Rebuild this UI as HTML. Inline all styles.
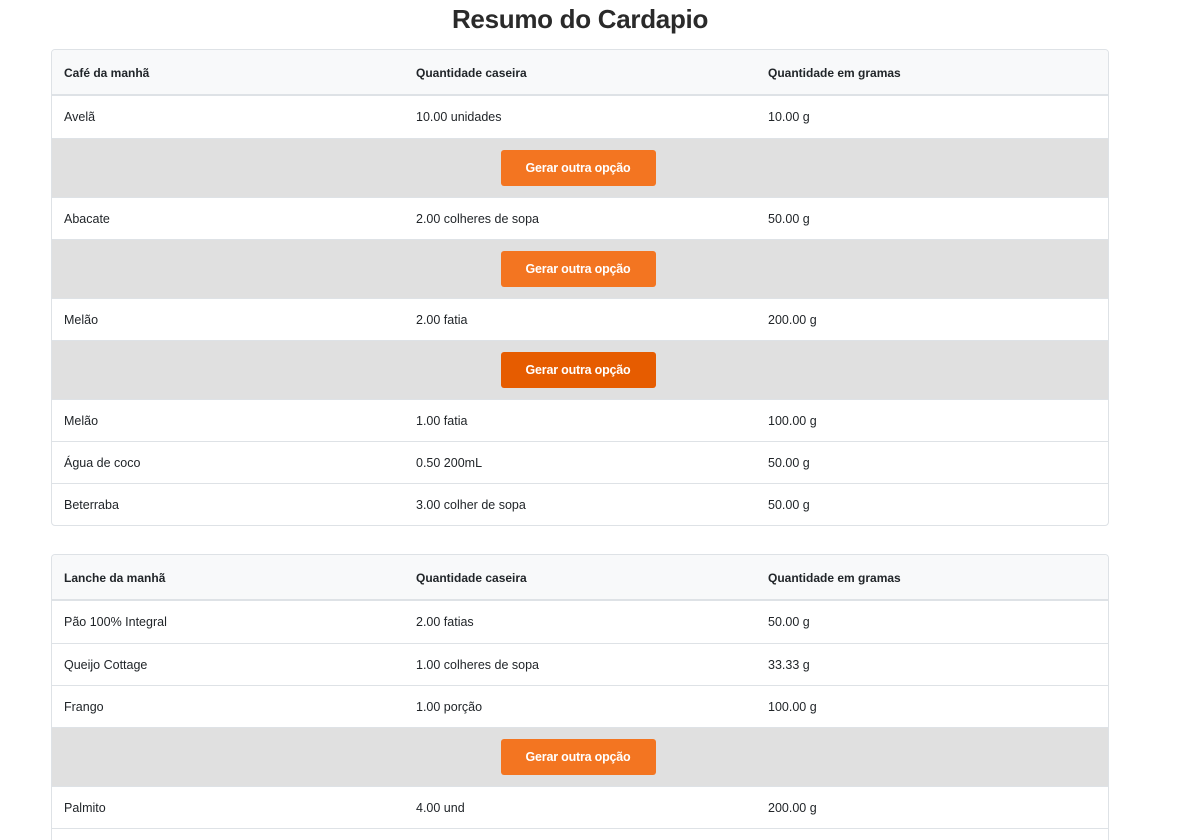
<!DOCTYPE html>
<html><head><meta charset="utf-8"><style>
*{box-sizing:border-box;margin:0;padding:0}
html,body{width:1202px;height:840px;overflow:hidden}
body{background:#fff;font-family:"Liberation Sans",sans-serif;color:#212529;position:relative}
h1{position:absolute;top:1px;left:0;width:1160px;text-align:center;font-size:26px;font-weight:bold;line-height:36px;color:#2a2a2a;letter-spacing:-0.3px}
.t{position:absolute;left:51px;width:1058px;border:1px solid #dee2e6;border-radius:4px;overflow:hidden}
.r{display:flex;height:42px;align-items:center;border-top:1px solid #dee2e6;font-size:12.5px}
.r div{width:352px;padding-left:12px}
.h{height:46px;background:#f8f9fa;border-top:none;border-bottom:2px solid #dee2e6;font-weight:bold;font-size:12px;padding-top:2px}
.h+.r{border-top:none}
.b{height:59px;background:#e0e0e0;justify-content:center;border-top:1px solid #dee2e6;padding-right:4px}
.b span{display:block;width:155px;height:36px;line-height:36px;text-align:center;background:#f37521;color:#fff;font-weight:bold;font-size:12.5px;border-radius:3px;letter-spacing:-0.2px}
.b span.d{background:#e65c00}
</style></head><body>
<h1>Resumo do Cardapio</h1>
<div class="t" style="top:49px">
<div class="r h"><div>Café da manhã</div><div>Quantidade caseira</div><div>Quantidade em gramas</div></div>
<div class="r"><div>Avelã</div><div>10.00 unidades</div><div>10.00 g</div></div>
<div class="r b"><span>Gerar outra opção</span></div>
<div class="r"><div>Abacate</div><div>2.00 colheres de sopa</div><div>50.00 g</div></div>
<div class="r b"><span>Gerar outra opção</span></div>
<div class="r"><div>Melão</div><div>2.00 fatia</div><div>200.00 g</div></div>
<div class="r b"><span class="d">Gerar outra opção</span></div>
<div class="r"><div>Melão</div><div>1.00 fatia</div><div>100.00 g</div></div>
<div class="r"><div>Água de coco</div><div>0.50 200mL</div><div>50.00 g</div></div>
<div class="r"><div>Beterraba</div><div>3.00 colher de sopa</div><div>50.00 g</div></div>
</div>
<div class="t" style="top:554px;border-bottom:none;border-radius:4px 4px 0 0">
<div class="r h"><div>Lanche da manhã</div><div>Quantidade caseira</div><div>Quantidade em gramas</div></div>
<div class="r"><div>Pão 100% Integral</div><div>2.00 fatias</div><div>50.00 g</div></div>
<div class="r"><div>Queijo Cottage</div><div>1.00 colheres de sopa</div><div>33.33 g</div></div>
<div class="r"><div>Frango</div><div>1.00 porção</div><div>100.00 g</div></div>
<div class="r b"><span>Gerar outra opção</span></div>
<div class="r"><div>Palmito</div><div>4.00 und</div><div>200.00 g</div></div>
<div class="r"><div></div><div></div><div></div></div>
</div>
</body></html>
